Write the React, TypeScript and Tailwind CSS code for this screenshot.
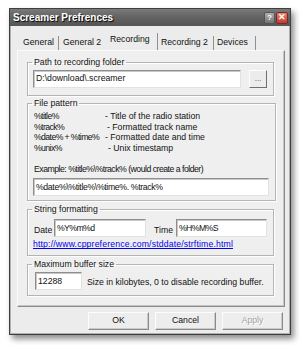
import React from 'react';

const font = { fontFamily: '"Liberation Sans", Arial, sans-serif' };

const Tab: React.FC<{ label: string; className: string; selected?: boolean }> = ({ label, className, selected }) => (
  <div
    className={`flex items-center border-r border-[#8f8f8f] ${
      selected ? 'h-[17px] -mt-[2px] pb-[3px]' : 'h-[14px]'
    } ${className}`}
  >
    {label}
  </div>
);

const Input: React.FC<{ value: string; className?: string }> = ({ value, className }) => (
  <div
    className={`flex items-center bg-white h-[18px] pl-[2px] border border-[#8e8e8e] border-b-[#e2e2e2] border-r-[#e2e2e2] shadow-[inset_1px_1px_0_#c8c8c8] text-[#111] whitespace-nowrap overflow-hidden ${className ?? ''}`}
  >
    {value}
  </div>
);

const Group: React.FC<{ title: string; className?: string; children: React.ReactNode }> = ({ title, className, children }) => (
  <fieldset
    className={`border border-[#b4b4b4] shadow-[inset_1px_1px_0_#fff,1px_1px_0_#fff] px-[6px] ${className ?? ''}`}
  >
    <legend className="-ml-[2px] px-[2px] leading-[11px] text-[#111]">{title}</legend>
    {children}
  </fieldset>
);

const Button: React.FC<{ label: string; disabled?: boolean }> = ({ label, disabled }) => (
  <div
    className={`w-[61px] h-[18px] flex items-center justify-center bg-[#ededed] border border-t-[#fdfdfd] border-l-[#fdfdfd] border-b-[#8a8a8a] border-r-[#8a8a8a] shadow-[inset_-1px_-1px_0_#c9c9c9] ${
      disabled ? 'text-[#a4a4a4] [text-shadow:1px_1px_0_#fff]' : 'text-[#111]'
    }`}
  >
    {label}
  </div>
);

export default function App() {
  const patterns = [
    ['%title%', '- Title of the radio station', 'ml-0'],
    ['%track%', '- Formatted track name', 'ml-[2px]'],
    ['%date% + %time%', '- Formatted date and time', 'ml-0'],
    ['%unix%', '- Unix timestamp', 'ml-[3px]'],
  ];

  return (
    <div className="w-[300px] h-[345px] bg-white pl-[9px] pt-[8px] text-[8.7px]" style={font}>
      <div className="w-[282px] h-[327px] border border-[#3f3f3f] bg-[#ececec] shadow-[3px_4px_6px_rgba(0,0,0,0.45)] flex flex-col">
        {/* Title bar */}
        <div className="h-[17px] flex items-center justify-between pl-[3px] pr-[2px] bg-gradient-to-b from-[#7a7a7a] via-[#626262] to-[#555555]">
          <span className="text-[10px] font-bold text-white [text-shadow:1px_1px_1px_#000]">Screamer Prefrences</span>
          <div className="flex gap-[1px]">
            <div className="w-[11px] h-[12px] rounded-[2px] bg-gradient-to-b from-[#b0b0b0] to-[#747474] border border-[#555] flex items-center justify-center text-[8px] font-bold text-white leading-none">
              ?
            </div>
            <div className="w-[12px] h-[12px] rounded-[2px] bg-gradient-to-b from-[#e58373] to-[#c03a2a] border border-[#7a2a22] flex items-center justify-center text-[9px] font-bold text-white leading-none">
              ✕
            </div>
          </div>
        </div>

        {/* Body */}
        <div className="flex-1 flex flex-col pl-[6px] pr-[6px] border-x-[1px] border-b-[1px] border-[#b0b0b0]">
          {/* Tabs */}
          <div className="flex items-end mt-[10px] h-[14px] text-[#111]">
            <Tab label="General" className="w-[42px] pl-[6px]" />
            <div className="w-[45px] pl-[4px] h-[14px] flex items-center">General 2</div>
            <Tab label="Recording" className="w-[54px] pl-[6px] border-[#7a7a7a]" selected />
            <Tab label="Recording 2" className="w-[56px] pl-[3px]" />
            <Tab label="Devices" className="w-[42px] pl-[3px]" />
          </div>

          {/* Panel */}
          <div className="w-[268px] h-[257px] bg-[#efefef] border border-t-[#fbfbfb] border-l-[#fbfbfb] border-b-[#8a8a8a] border-r-[#8a8a8a] shadow-[inset_-1px_-1px_0_#c6c6c6] pl-[9px] pr-[10px] pt-[6px]">
            <Group title="Path to recording folder" className="pb-[7px]">
              <div className="flex items-start pt-[2px]">
                <Input value="D:\download\.screamer" className="-ml-[1px] w-[208px] h-[17px]" />
                <div className="ml-[8px] w-[18px] h-[18px] flex items-center justify-center bg-[#ececec] border border-t-[#fdfdfd] border-l-[#fdfdfd] border-b-[#707070] border-r-[#707070] text-[#444] text-[8px]">
                  ...
                </div>
              </div>
            </Group>

            <Group title="File pattern" className="mt-[2px] pb-[4px]">
              <div className="pt-[2px] leading-[10.6px] text-[#111]">
                {patterns.map(([k, d, m]) => (
                  <div key={k} className="flex">
                    <span className="w-[71px] tracking-[-0.6px] whitespace-nowrap">{k}</span>
                    <span className={m}>{d}</span>
                  </div>
                ))}
              </div>
              <div className="mt-[11px] leading-[11px] text-[#111] tracking-[-0.5px] whitespace-nowrap">
                Example: %title%\%track% (would create a folder)
              </div>
              <Input value="%date%\%title%\%time%. %track%" className="mt-[3px] -ml-[1px] w-[236px] tracking-[-0.35px]" />
            </Group>

            <Group title="String formatting" className="mt-[3px] pb-[5px]">
              <div className="flex items-end pt-[4px] text-[#111]">
                <span className="w-[20px] leading-[11px] mb-[1px]">Date</span>
                <Input value="%Y%m%d" className="w-[92px] h-[17px] tracking-[-0.6px]" />
                <span className="ml-[8px] w-[22px] leading-[11px] mb-[1px]">Time</span>
                <Input value="%H%M%S" className="w-[91px] h-[17px] tracking-[-0.6px]" />
              </div>
              <div className="mt-[2px] -ml-[1px] leading-[11px] text-[#0000ee] underline whitespace-nowrap tracking-[0.15px]">
                http://www.cppreference.com/stddate/strftime.html
              </div>
            </Group>

            <Group title="Maximum buffer size" className="mt-[3px] pb-[5px]">
              <div className="flex items-center pt-[2px] text-[#111]">
                <Input value="12288" className="ml-[1px] w-[47px] h-[18px]" />
                <span className="ml-[5px] mt-[3px] whitespace-nowrap">Size in kilobytes, 0 to disable recording buffer.</span>
              </div>
            </Group>
          </div>

          {/* Buttons */}
          <div className="flex justify-end gap-[6px] mt-[5px]">
            <Button label="OK" />
            <Button label="Cancel" />
            <Button label="Apply" disabled />
          </div>
        </div>
      </div>
    </div>
  );
}
